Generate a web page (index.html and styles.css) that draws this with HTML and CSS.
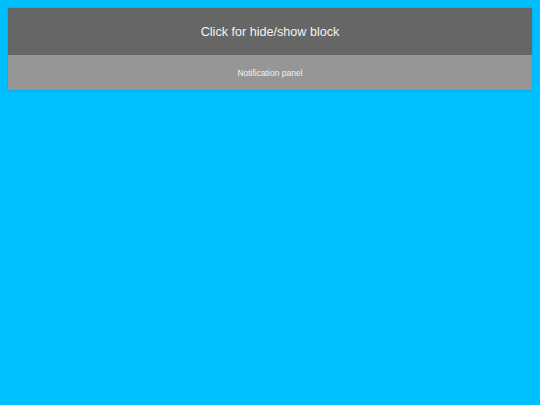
FILE: index.html
```html
<!DOCTYPE html>
<html>
<head>
<meta charset="utf-8">
<link rel="stylesheet" href="styles.css">
</head>
<body>
<div class="block">
  <div class="toggle">Click for hide/show block</div>
  <div class="panel">Notification panel</div>
</div>
</body>
</html>
```

FILE: styles.css
```css
html, body {
  margin: 0;
  padding: 0;
  background: #00bfff;
}
body {
  padding: 8px;
  font-family: "Liberation Sans", Arial, sans-serif;
}
.block {
  box-shadow: 0 0 2px rgba(0, 0, 0, 0.2);
}
.toggle {
  background: #666666;
  color: #f2f2f2;
  height: 47px;
  display: flex;
  align-items: center;
  justify-content: center;
  font-size: 12.6px;
}
.panel {
  background: #969696;
  color: #f2f2f2;
  height: 35px;
  display: flex;
  align-items: center;
  justify-content: center;
  font-size: 8.5px;
}
```
